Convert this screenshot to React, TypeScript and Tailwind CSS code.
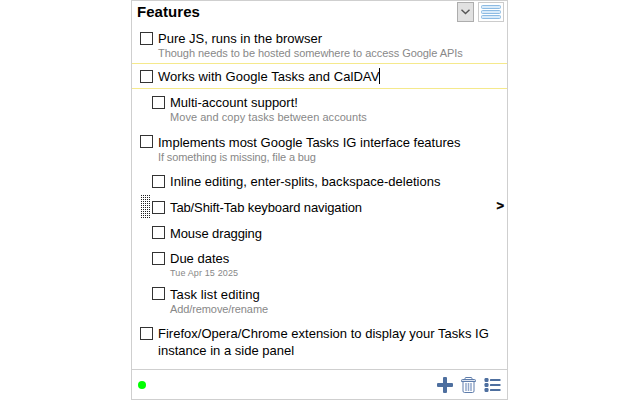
import React from "react";

type Task = {
  title: string;
  note?: string;
  date?: string;
  row: string;
  text?: string;
  titleClass?: string;
  noteClass?: string;
  active?: boolean;
  selected?: boolean;
};

const tasks: Task[] = [
  { title: "Pure JS, runs in the browser", note: "Though needs to be hosted somewhere to access Google APIs", row: "h-[33px] pl-2", noteClass: "tracking-[-0.05px]" },
  { title: "Works with Google Tasks and CalDAV", row: "h-[26px] pl-2 pt-1 border-y border-[#f5e98c]", titleClass: "tracking-[0.05px]", active: true },
  { title: "Multi-account support!", note: "Move and copy tasks between accounts", row: "mt-[5px] h-[39px] pl-5", noteClass: "tracking-[0.05px]" },
  { title: "Implements most Google Tasks IG interface features", note: "If something is missing, file a bug", row: "h-[40px] pl-2", text: "pt-px", noteClass: "tracking-[-0.12px]" },
  { title: "Inline editing, enter-splits, backspace-deletions", row: "h-[26px] pl-5", titleClass: "tracking-[0.02px]" },
  { title: "Tab/Shift-Tab keyboard navigation", row: "h-[25px] pl-5", titleClass: "tracking-[-0.12px]", selected: true },
  { title: "Mouse dragging", row: "h-[26px] pl-5", text: "pt-px", titleClass: "tracking-[-0.1px]" },
  { title: "Due dates", date: "Tue Apr 15 2025", row: "h-[35px] pl-5" },
  { title: "Task list editing", note: "Add/remove/rename", row: "h-[40px] pl-5", text: "pt-px", titleClass: "tracking-[0.1px]", noteClass: "tracking-[-0.1px]" },
  { title: "Firefox/Opera/Chrome extension to display your Tasks IG instance in a side panel", row: "h-[44px] pl-2", titleClass: "tracking-[0.015px]" },
];

function Row({ t }: { t: Task }) {
  return (
    <li className={`relative flex shrink-0 ${t.row}`}>
      {t.selected && (
        <svg className="absolute left-[9px] top-[-4px]" width="10" height="24" shapeRendering="crispEdges">
          <defs>
            <pattern id="grip" width="2" height="2" patternUnits="userSpaceOnUse">
              <rect width="1" height="1" fill="#222" />
            </pattern>
          </defs>
          <rect width="9" height="23" fill="url(#grip)" />
        </svg>
      )}
      <span className="mt-[2px] size-[13px] shrink-0 border border-[#333] bg-white" />
      <div className={`ml-[5px] w-[337px] ${t.text ?? ""}`}>
        <div className={`flex text-[13px] leading-[17px] text-black ${t.titleClass ?? ""}`}>
          <span>{t.title}</span>
          {t.active && <span className="h-4 w-px bg-black" />}
        </div>
        {t.note && (
          <div className={`whitespace-nowrap text-[11px] leading-[12px] text-[#888] ${t.noteClass ?? ""}`}>{t.note}</div>
        )}
        {t.date && <div className="text-[9px] leading-[12px] tracking-[0.13px] text-[#888]">{t.date}</div>}
      </div>
      {t.selected && (
        <span className="absolute right-[3px] top-[-2px] text-[13px] font-bold leading-[17px] text-black [-webkit-text-stroke:0.4px_black]">&gt;</span>
      )}
    </li>
  );
}

export default function App() {
  return (
    <div className="flex h-[400px] w-[640px] bg-white pl-[131px] font-['Liberation_Sans',Arial,sans-serif]">
      <main className="flex h-[400px] w-[377px] flex-col border border-[#cfcfcf]">
        <header className="flex h-[29px] shrink-0 items-start pl-[5px] pr-[3px] pt-px">
          <h1 className="flex-1 text-[15px] font-bold leading-[20px] tracking-[0.05px] text-black">Features</h1>
          <button className="flex h-5 w-[17px] items-center justify-center border border-[#adadad] bg-[#e1e1e1]">
            <svg width="9" height="6" fill="none" stroke="#555" strokeWidth="1.4">
              <path d="M.5 .7 4.5 4.5 8.5 .7" />
            </svg>
          </button>
          <button className="ml-1 flex h-5 w-[26px] items-center justify-center border border-[#cccccc] bg-white">
            <svg width="20" height="14" fill="#d9ebfa" stroke="#8dbbe3">
              <rect x=".5" y=".5" width="19" height="3" rx="1" />
              <rect x=".5" y="5.5" width="19" height="3" rx="1" />
              <rect x=".5" y="10.5" width="19" height="3" rx="1" />
            </svg>
          </button>
        </header>
        <ul className="flex flex-1 flex-col">
          {tasks.map((t) => (
            <Row key={t.title} t={t} />
          ))}
        </ul>
        <footer className="flex h-[30px] shrink-0 items-center border-t border-[#cfcfcf] pl-[6px] pr-[6px]">
          <span className="size-2 rounded-full bg-[#00ff00]" />
          <div className="ml-auto flex items-center">
            <svg width="16" height="16" fill="#4e6f9f">
              <path d="M6 1Q6 0 7 0H9Q10 0 10 1V6H15Q16 6 16 7V9Q16 10 15 10H10V15Q10 16 9 16H7Q6 16 6 15V10H1Q0 10 0 9V7Q0 6 1 6H6Z" />
            </svg>
            <svg className="ml-2" width="15" height="16" fill="none" stroke="#5f7dab">
              <path d="M4 2.500V1.500Q4 .5 5 .5H10Q11 .5 11 1.500V2.500" />
              <path d="M1.500 2.500H13.500Q14.500 2.500 14.500 3.500V4.500H.5V3.500Q.5 2.500 1.500 2.500Z" fill="#dbe3ef" />
              <path d="M2 5V14Q2 15.500 3.500 15.500H11.500Q13 15.500 13 14V5" />
              <path d="M5 6v8M7.500 6v8M10 6v8" stroke="#93a8cb" strokeWidth="1.500" />
            </svg>
            <svg className="ml-2" width="17" height="14" fill="#4e6f9f">
              <rect x="0.500" width="4" height="4" rx="1.200" />
              <rect x="0.500" y="5" width="4" height="4" rx="1.200" />
              <rect x="0.500" y="10" width="4" height="4" rx="1.200" />
              <rect x="6" y="0.900" width="10.500" height="2.200" rx=".5" />
              <rect x="6" y="5.900" width="10.500" height="2.200" rx=".5" />
              <rect x="6" y="10.900" width="10.500" height="2.200" rx=".5" />
            </svg>
          </div>
        </footer>
      </main>
    </div>
  );
}
